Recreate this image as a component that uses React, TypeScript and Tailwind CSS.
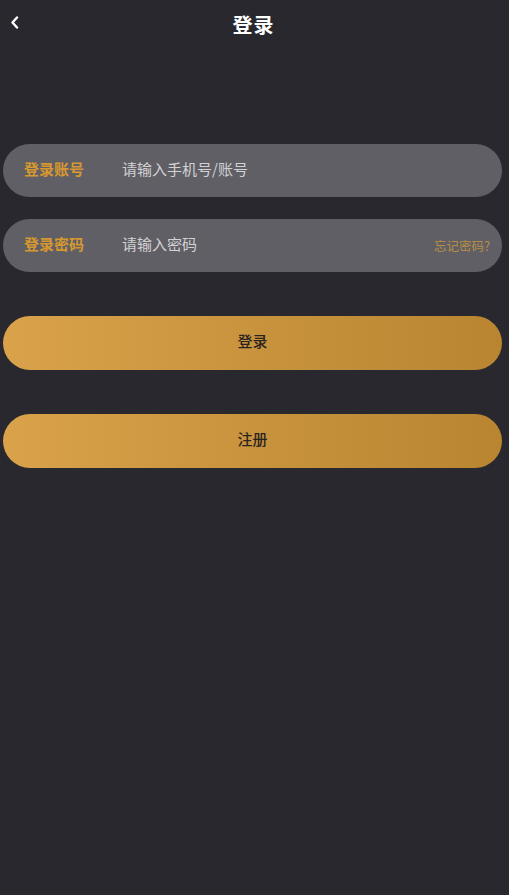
const FONT = { fontFamily: '"Noto Sans CJK SC", "Noto Sans", sans-serif' };

export default function App() {
  return (
    <div
      className="min-h-[895px] w-full bg-[#29282f] text-white"
      style={FONT}
    >
      <header className="relative flex h-[49px] items-center justify-center">
        <button className="absolute left-[8px] top-[14px] flex h-[16px] w-[12px] items-center justify-center">
          <svg width="9" height="13" viewBox="0 0 9 13" fill="none">
            <path
              d="M7 1.5 2.5 6.5 7 11.5"
              stroke="#ffffff"
              strokeWidth="2.4"
              strokeLinecap="round"
              strokeLinejoin="round"
            />
          </svg>
        </button>
        <h1 className="-ml-[2px] text-[20px] font-bold leading-none tracking-[1px]">登录</h1>
      </header>

      <div className="flex flex-col px-[3px] pt-[95px] pr-[7px]">
        <div className="flex h-[53px] items-center rounded-full bg-[#605f65] pb-[3px] pl-[21px]">
          <span className="w-[98px] text-[15px] font-bold text-[#d6982f]">登录账号</span>
          <span className="text-[15px] text-[#d2d1d4]">请输入手机号/账号</span>
        </div>

        <div className="mt-[22px] flex h-[53px] items-center rounded-full bg-[#605f65] pb-[3px] pl-[21px] pr-[12px]">
          <span className="w-[98px] text-[15px] font-bold text-[#d6982f]">登录密码</span>
          <span className="flex-1 text-[15px] text-[#d2d1d4]">请输入密码</span>
          <span className="mt-[5px] text-[12.5px] text-[#b88f44]">忘记密码?</span>
        </div>

        <button className="mt-[44px] flex h-[54px] items-center justify-center rounded-full bg-gradient-to-r from-[#d9a24b] to-[#b98530] pb-[4px] text-[15px] font-medium text-[#2a2420]">
          登录
        </button>

        <button className="mt-[44px] flex h-[54px] items-center justify-center rounded-full bg-gradient-to-r from-[#d9a24b] to-[#b98530] pb-[4px] text-[15px] font-medium text-[#2a2420]">
          注册
        </button>
      </div>
    </div>
  );
}
